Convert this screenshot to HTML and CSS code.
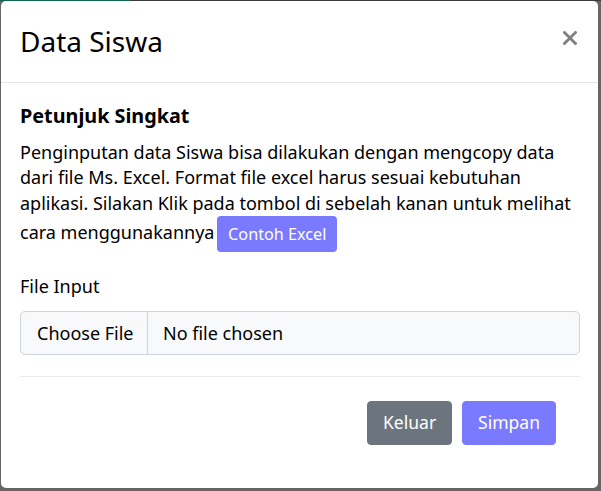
FILE: index.html
```html
<!DOCTYPE html>
<html lang="id">
<head>
<meta charset="utf-8">
<title>Data Siswa</title>
<link rel="stylesheet" href="styles.css">
</head>
<body>
<div class="modal">
  <div class="modal-header">
    <h4 class="modal-title">Data Siswa</h4>
    <button class="close" type="button" aria-label="Close">
      <svg width="14" height="14" viewBox="0 0 14 14"><path d="M1.5 1.5 L12.5 12.5 M12.5 1.5 L1.5 12.5" stroke="#7f7f7f" stroke-width="2.8" stroke-linecap="square"/></svg>
    </button>
  </div>
  <div class="modal-body">
    <h5 class="hint-title">Petunjuk Singkat</h5>
    <p class="hint">Penginputan data Siswa bisa dilakukan dengan mengcopy data dari file Ms. Excel. Format file excel harus sesuai kebutuhan aplikasi. Silakan Klik pada tombol di sebelah kanan untuk melihat cara menggunakannya <span class="btn-inline">Contoh Excel</span></p>
    <div class="label">File Input</div>
    <div class="file-box">
      <span class="file-btn">Choose File</span>
      <span class="file-name">No file chosen</span>
    </div>
    <div class="divider"></div>
  </div>
  <div class="modal-footer">
    <button class="btn btn-secondary" type="button">Keluar</button>
    <button class="btn btn-primary" type="button">Simpan</button>
  </div>
</div>
</body>
</html>
```

FILE: styles.css
```css
html, body {
  margin: 0;
  height: 491px;
  overflow: hidden;
}
body {
  background: linear-gradient(to right, #0d6a4e 0 130px, #3b3b3b 130px) top left / 100% 1px no-repeat, #666666;
  font-family: "Noto Sans", "Open Sans", sans-serif;
  font-size: 18px;
  line-height: 25.5px;
  color: #111;
}
.modal {
  margin: 1px 0 0 1px;
  width: 597px;
  height: 487px;
  background: #fff;
  border-radius: 5px;
  display: flex;
  flex-direction: column;
}
.modal-header {
  box-sizing: border-box;
  height: 82px;
  padding: 21px 21px 0 19px;
  border-bottom: 1px solid #e6e6e6;
  display: flex;
  justify-content: space-between;
  align-items: flex-start;
}
.modal-title {
  margin: 0;
  font-size: 28px;
  line-height: 38px;
  font-weight: 400;
  color: #000;
}
.close {
  margin-top: 9px;
  padding: 0;
  border: 0;
  background: none;
  width: 14px;
  height: 14px;
  display: block;
}
.close svg { display: block; }
.modal-body {
  padding: 20px 18px 0 19px;
}
.hint-title {
  margin: 0 0 11.5px;
  font-size: 19.8px;
  line-height: 25.2px;
  font-weight: 700;
  color: #000;
}
.hint {
  margin: 0 0 22px;
  color: #000;
}
.btn-inline {
  display: inline-block;
  background: #7a7aff;
  color: #fff;
  border-radius: 4px;
  padding: 6px 11px;
  font-size: 16.2px;
  line-height: 24px;
  margin-left: -2px;
  vertical-align: -1px;
}
.label {
  margin-bottom: 11.5px;
  color: #000;
}
.file-box {
  display: flex;
  height: 44px;
  box-sizing: border-box;
  border: 1px solid #ced4da;
  border-radius: 5px;
  background: #f8f9fb;
  line-height: 42px;
  color: #000;
}
.file-btn {
  box-sizing: border-box;
  width: 127px;
  padding-left: 16px;
  border-right: 1px solid #ced4da;
}
.file-name {
  padding-left: 15px;
}
.divider {
  margin-top: 21px;
  height: 1px;
  background: #e9ecef;
}
.modal-footer {
  display: flex;
  justify-content: flex-end;
  gap: 10px;
  padding: 24px 42px 0 0;
}
.btn {
  font-family: inherit;
  font-size: 17.5px;
  line-height: 25.5px;
  height: 44px;
  box-sizing: border-box;
  padding: 8px 15px;
  border: 1px solid transparent;
  border-radius: 4px;
  color: #fff;
}
.btn-secondary { background: #6c757d; border-color: #6c757d; }
.btn-primary { background: #7a7aff; border-color: #7a7aff; }
```
